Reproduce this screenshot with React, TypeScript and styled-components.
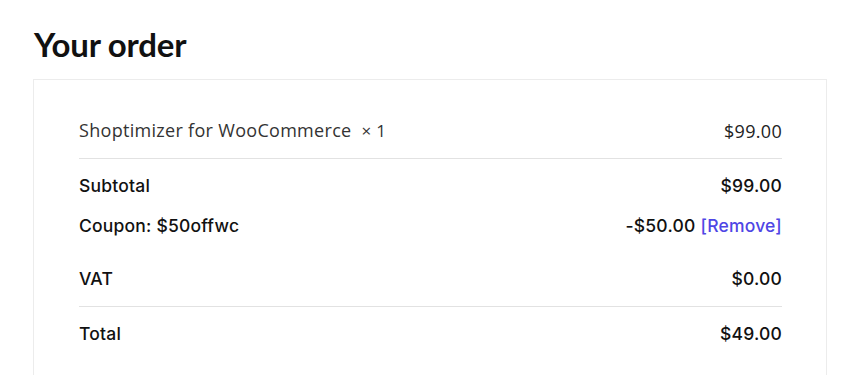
import React from "react";
import styled, { createGlobalStyle } from "styled-components";

const Global = createGlobalStyle`
  html, body { margin: 0; padding: 0; background: #fff; }
  body { font-family: "Open Sans", "Noto Sans", sans-serif; color: #111; }
`;

const Page = styled.div`
  padding: 24px 18px 0 33px;
  width: 845px;
  box-sizing: border-box;
`;

const Title = styled.h3`
  margin: 0 0 0 1px;
  font-family: Lato, "Noto Sans", sans-serif;
  font-size: 33px;
  line-height: 40px;
  font-weight: 700;
  color: #111;
  letter-spacing: -0.2px;
`;

const Box = styled.div`
  margin-top: 15px;
  width: 794px;
  box-sizing: border-box;
  border: 1px solid #ececec;
  border-bottom: none;
  padding: 22px 44px 40px 45px;
  height: 300px;
`;

const Row = styled.div<{ $pt: number; $pb: number; $divider?: boolean }>`
  display: flex;
  justify-content: space-between;
  align-items: center;
  padding: ${(p) => p.$pt}px 0 ${(p) => p.$pb}px;
  line-height: 24px;
  font-size: 18px;
  letter-spacing: 0.3px;
  border-bottom: ${(p) => (p.$divider ? "1px solid #e2e2e2" : "none")};
`;

const ItemName = styled.span`
  color: #333;
  font-weight: 400;
`;

const Qty = styled.span`
  margin-left: 5px;
  font-size: 17px;
`;

const Strong = styled.span`
  font-family: Inter, "Open Sans", sans-serif;
  font-size: 17.5px;
  font-weight: 500;
  letter-spacing: 0.2px;
  color: #111;
  transform: translateY(1px);
`;

const Price = styled.span`
  color: #222;
  font-weight: 400;
`;

const Remove = styled.a`
  color: #4f46e5;
  text-decoration: none;
  margin-left: 5px;
`;

export default function App() {
  return (
    <>
      <Global />
      <Page>
        <Title>Your order</Title>
        <Box>
          <Row $pt={16} $pb={15} $divider>
            <ItemName>
              Shoptimizer for WooCommerce <Qty>× 1</Qty>
            </ItemName>
            <Price>$99.00</Price>
          </Row>
          <Row $pt={14} $pb={2}>
            <Strong>Subtotal</Strong>
            <Strong>$99.00</Strong>
          </Row>
          <Row $pt={14} $pb={14}>
            <Strong>Coupon: $50offwc</Strong>
            <Strong>
              -$50.00<Remove href="#">[Remove]</Remove>
            </Strong>
          </Row>
          <Row $pt={15} $pb={16} $divider>
            <Strong>VAT</Strong>
            <Strong>$0.00</Strong>
          </Row>
          <Row $pt={14} $pb={14}>
            <Strong>Total</Strong>
            <Strong>$49.00</Strong>
          </Row>
        </Box>
      </Page>
    </>
  );
}
